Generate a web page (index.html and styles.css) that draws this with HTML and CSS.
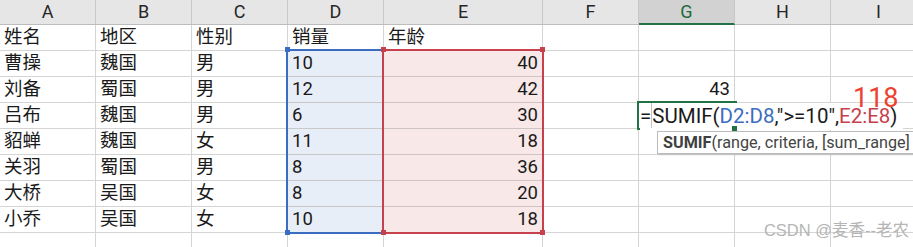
FILE: index.html
```html
<!DOCTYPE html>
<html lang="zh-CN">
<head>
<meta charset="UTF-8">
<meta name="viewport" content="width=device-width, initial-scale=1.0">
<title>SUMIF</title>
<link rel="stylesheet" href="styles.css">
</head>
<body>
<div class="sheet">
    <div class="grid">
        <!-- column headers -->
        <div class="col-head">A</div>
        <div class="col-head">B</div>
        <div class="col-head">C</div>
        <div class="col-head">D</div>
        <div class="col-head">E</div>
        <div class="col-head">F</div>
        <div class="col-head active">G</div>
        <div class="col-head">H</div>
        <div class="col-head">I</div>

        <div class="cell">姓名</div>
        <div class="cell">地区</div>
        <div class="cell">性别</div>
        <div class="cell">销量</div>
        <div class="cell">年龄</div>
        <div class="cell"></div>
        <div class="cell"></div>
        <div class="cell"></div>
        <div class="cell"></div>

        <div class="cell">曹操</div>
        <div class="cell">魏国</div>
        <div class="cell">男</div>
        <div class="cell fill-d">10</div>
        <div class="cell fill-e num">40</div>
        <div class="cell"></div>
        <div class="cell"></div>
        <div class="cell"></div>
        <div class="cell"></div>

        <div class="cell">刘备</div>
        <div class="cell">蜀国</div>
        <div class="cell">男</div>
        <div class="cell fill-d">12</div>
        <div class="cell fill-e num">42</div>
        <div class="cell"></div>
        <div class="cell num">43</div>
        <div class="cell"></div>
        <div class="cell"></div>

        <div class="cell">吕布</div>
        <div class="cell">魏国</div>
        <div class="cell">男</div>
        <div class="cell fill-d">6</div>
        <div class="cell fill-e num">30</div>
        <div class="cell"></div>
        <div class="cell"></div>
        <div class="cell"></div>
        <div class="cell"></div>

        <div class="cell">貂蝉</div>
        <div class="cell">魏国</div>
        <div class="cell">女</div>
        <div class="cell fill-d">11</div>
        <div class="cell fill-e num">18</div>
        <div class="cell"></div>
        <div class="cell"></div>
        <div class="cell"></div>
        <div class="cell"></div>

        <div class="cell">关羽</div>
        <div class="cell">蜀国</div>
        <div class="cell">男</div>
        <div class="cell fill-d">8</div>
        <div class="cell fill-e num">36</div>
        <div class="cell"></div>
        <div class="cell"></div>
        <div class="cell"></div>
        <div class="cell"></div>

        <div class="cell">大桥</div>
        <div class="cell">吴国</div>
        <div class="cell">女</div>
        <div class="cell fill-d">8</div>
        <div class="cell fill-e num">20</div>
        <div class="cell"></div>
        <div class="cell"></div>
        <div class="cell"></div>
        <div class="cell"></div>

        <div class="cell">小乔</div>
        <div class="cell">吴国</div>
        <div class="cell">女</div>
        <div class="cell fill-d">10</div>
        <div class="cell fill-e num">18</div>
        <div class="cell"></div>
        <div class="cell"></div>
        <div class="cell"></div>
        <div class="cell"></div>

        <div class="cell"></div>
        <div class="cell"></div>
        <div class="cell"></div>
        <div class="cell"></div>
        <div class="cell"></div>
        <div class="cell"></div>
        <div class="cell"></div>
        <div class="cell"></div>
        <div class="cell"></div>
    </div>

    <!-- referenced ranges D2:D8 and E2:E8 -->
    <div class="range range-d"></div>
    <div class="range range-e"></div>
    <span class="handle handle-d" style="left: 285px; top: 47px;"></span>
    <span class="handle handle-d" style="left: 285px; top: 230px;"></span>
    <span class="handle handle-e" style="left: 381px; top: 47px;"></span>
    <span class="handle handle-e" style="left: 381px; top: 230px;"></span>
    <span class="handle handle-e" style="left: 540px; top: 47px;"></span>
    <span class="handle handle-e" style="left: 540px; top: 230px;"></span>

    <!-- cell G4 in edit mode -->
    <div class="editor">
        <span class="formula">=<i class="caret"></i>SUMIF(<span class="ref-d">D2:D8</span>,"&gt;=10",<span class="ref-e">E2:E8</span>)</span>
        <span class="fill-handle"></span>
    </div>
    <div class="tip"><b>SUMIF</b>(range, criteria, [sum_range]</div>

    <div class="total">118</div>
    <div class="mark">CSDN @麦香--老农</div>
</div>
</body>
</html>
```

FILE: styles.css
```css
body {
    margin: 0;
    padding: 0;
    background-color: #ffffff;
    overflow: hidden;
    font-family: Roboto, "Noto Sans CJK SC", sans-serif;
    color: #1a1a1a;
}
.sheet {
    position: relative;
    width: 913px;
    height: 247px;
    overflow: hidden;
}
.grid {
    display: grid;
    grid-template-columns: 96px 96px 96px 96px 159px 96px 96px 96px 96px;
    grid-template-rows: 25px repeat(9, 26px);
}
.col-head {
    box-sizing: border-box;
    background-color: #e6e6e6;
    border-right: 1px solid #c8c8c8;
    border-bottom: 1px solid #bdbdbd;
    text-align: center;
    font-size: 18px;
    line-height: 24px;
    color: #262626;
}
.col-head.active {
    background-color: #d2d2d2;
    border-bottom: 2px solid #217346;
    color: #1d6b40;
}
.cell {
    box-sizing: border-box;
    border-right: 1px solid #d4d4d4;
    border-bottom: 1px solid #d4d4d4;
    padding: 0 4px;
    font-size: 18.5px;
    line-height: 25px;
    white-space: nowrap;
    overflow: hidden;
}
.num {
    text-align: right;
}
.fill-d {
    background-color: #e8eef8;
    border-bottom-color: #c8c8c8;
}
.fill-e {
    background-color: #f8e8e8;
    border-bottom-color: #cfc4c4;
}
.range {
    position: absolute;
    top: 49px;
    height: 185px;
    box-sizing: border-box;
    border: 2px solid;
}
.range-d {
    left: 286px;
    width: 98px;
    border-color: #3a6dc2;
}
.range-e {
    left: 382px;
    width: 162px;
    border-color: #c6414c;
}
.handle {
    position: absolute;
    width: 5px;
    height: 5px;
}
.handle-d {
    background-color: #3a6dc2;
}
.handle-e {
    background-color: #c6414c;
}
.editor {
    position: absolute;
    left: 637px;
    top: 101px;
    width: 100px;
    height: 29px;
    box-sizing: border-box;
    border: 2px solid #217346;
}
.formula {
    position: absolute;
    left: 1px;
    top: 0;
    padding: 3px 6px 2px 0;
    background-color: #ffffff;
    font-size: 20.5px;
    line-height: 20px;
    white-space: nowrap;
    color: #1a1a1a;
}
.caret {
    display: inline-block;
    width: 1px;
    height: 25px;
    margin-top: -3px;
    vertical-align: top;
    background-color: #c4c4c4;
}
.ref-d {
    color: #3a6dc2;
}
.ref-e {
    color: #c6414c;
}
.fill-handle {
    position: absolute;
    right: -3px;
    bottom: -4px;
    width: 5px;
    height: 5px;
    background-color: #217346;
    border: 1px solid #ffffff;
}
.tip {
    position: absolute;
    left: 657px;
    top: 131px;
    height: 23px;
    box-sizing: border-box;
    padding: 0 6px 0 5px;
    border: 1px solid #bcbcbc;
    background-color: #ffffff;
    box-shadow: 1px 1px 2px rgba(0, 0, 0, 0.12);
    font-size: 16.2px;
    line-height: 21px;
    color: #444444;
    white-space: nowrap;
}
.tip b {
    font-weight: bold;
    color: #404040;
}
.total {
    position: absolute;
    left: 853px;
    top: 90px;
    font-size: 27px;
    line-height: 16px;
    color: #ec4230;
}
.mark {
    position: absolute;
    right: 4px;
    top: 220px;
    font-family: "Liberation Sans", "Noto Sans CJK SC", sans-serif;
    font-size: 16.5px;
    line-height: 20px;
    color: #b5b5b5;
}
```
